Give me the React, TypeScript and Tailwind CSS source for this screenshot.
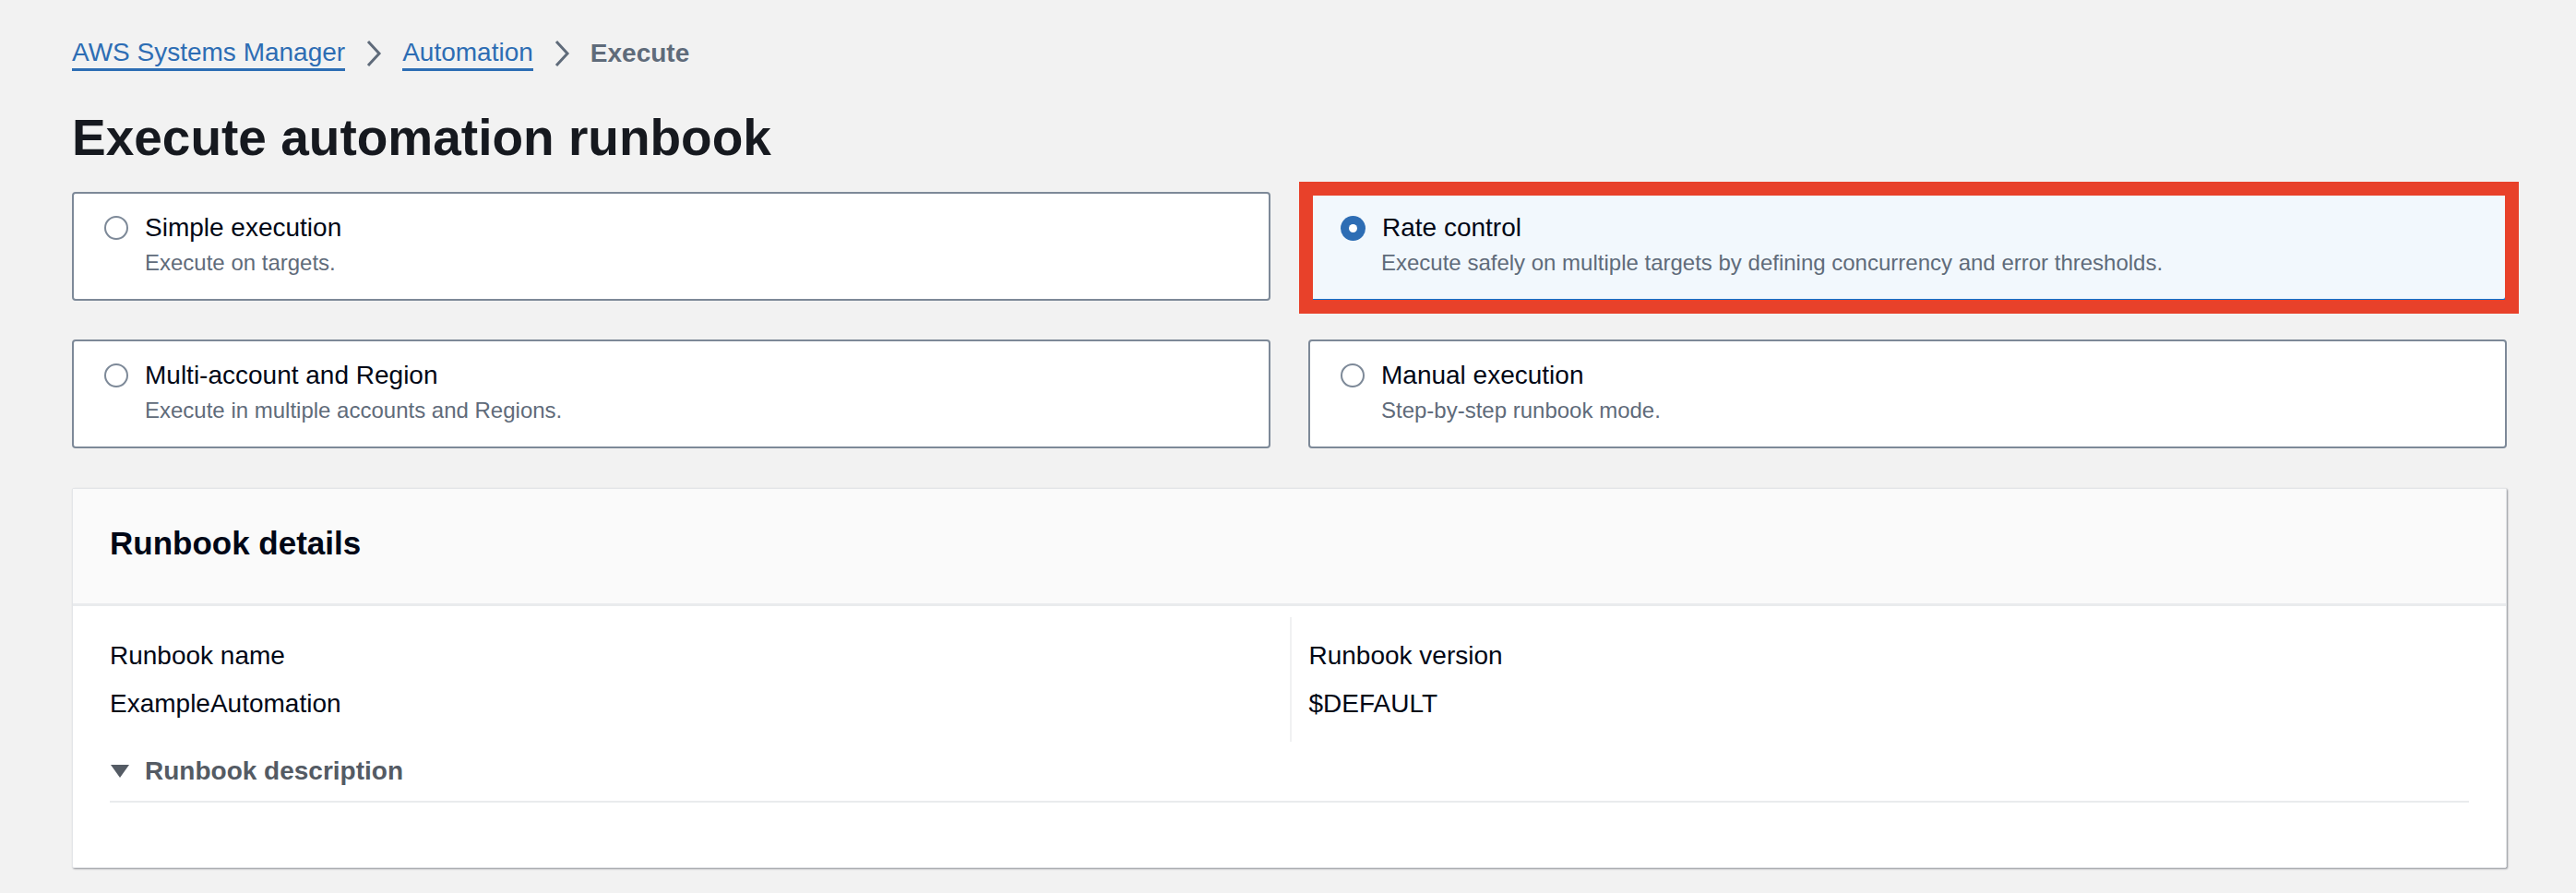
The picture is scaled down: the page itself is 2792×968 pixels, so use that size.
import React from "react";

type Option = {
  title: string;
  desc: string;
  selected?: boolean;
};

const options: Option[] = [
  { title: "Simple execution", desc: "Execute on targets." },
  {
    title: "Rate control",
    desc: "Execute safely on multiple targets by defining concurrency and error thresholds.",
    selected: true,
  },
  { title: "Multi-account and Region", desc: "Execute in multiple accounts and Regions." },
  { title: "Manual execution", desc: "Step-by-step runbook mode." },
];

const Chevron = () => (
  <svg width="18" height="30" viewBox="0 0 18 30" className="mx-[22px] shrink-0">
    <path d="M3 2 L15 15 L3 28" fill="none" stroke="#5f6b7a" strokeWidth="3" />
  </svg>
);

const Tile = ({ title, desc, selected }: Option) => (
  <div
    className={
      selected
        ? "relative h-[118px] rounded-[4px] border-2 border-[#0972d3] bg-[#f2f8fd] pl-[33px] pt-[17px]"
        : "relative h-[118px] rounded-[4px] border-2 border-[#7d8998] bg-white pl-[33px] pt-[17px]"
    }
  >
    <div className="flex items-center">
      {selected ? (
        <span className="flex h-[27px] w-[27px] shrink-0 items-center justify-center rounded-full bg-[#2d6db4]">
          <span className="h-[9px] w-[9px] rounded-full bg-white" />
        </span>
      ) : (
        <span className="h-[26px] w-[26px] shrink-0 rounded-full border-2 border-[#7d8998] bg-white" />
      )}
      <span className="ml-[18px] text-[28px] leading-[40px] text-[#000716]">{title}</span>
    </div>
    <div className="ml-[44px] mt-[2px] text-[24px] leading-[32px] text-[#5f6b7a]">{desc}</div>
    {selected && (
      <div className="pointer-events-none absolute -bottom-[16px] -left-[12px] -right-[15px] -top-[13px] border-[15px] border-[#e8412a]" />
    )}
  </div>
);

export default function App() {
  return (
    <div
      className="min-h-[968px] bg-[#f2f2f2] pl-[78px] pr-[75px] pt-[38px]"
      style={{ fontFamily: '"Liberation Sans", Arial, sans-serif' }}
    >
      <nav className="flex h-[40px] items-center text-[28px]">
        <a className="border-b-[3px] border-[#2d6db4] leading-[34px] text-[#2d6db4]">AWS Systems Manager</a>
        <Chevron />
        <a className="border-b-[3px] border-[#2d6db4] leading-[34px] text-[#2d6db4]">Automation</a>
        <Chevron />
        <span className="font-bold leading-[34px] text-[#5f6b7a]">Execute</span>
      </nav>

      <h1 className="mt-[39px] text-[55px] font-bold leading-[64px] text-[#16191f]">Execute automation runbook</h1>

      <div className="mt-[27px] grid grid-cols-2 gap-x-[41px] gap-y-[42px]">
        {options.map((o) => (
          <Tile key={o.title} {...o} />
        ))}
      </div>

      <section className="mt-[43px] h-[412px] rounded-[2px] border border-[#e3e5e8] bg-white shadow-[1px_1px_2px_rgba(0,7,22,0.4)]">
        <div className="border-b-[3px] border-[#e9ebed] bg-[#fafafa] pb-[43px] pl-[40px] pt-[37px]">
          <h2 className="text-[35px] font-bold leading-[44px] text-[#000716]">Runbook details</h2>
        </div>
        <div className="px-[40px] pt-[12px]">
          <div className="grid grid-cols-2">
            <div className="pb-[21px] pt-[22px]">
              <div className="text-[28px] leading-[40px] text-[#000716]">Runbook name</div>
              <div className="mt-[12px] text-[28px] leading-[40px] text-[#000716]">ExampleAutomation</div>
            </div>
            <div className="border-l-2 border-[#f0f1f2] pb-[21px] pl-[19px] pt-[22px]">
              <div className="text-[28px] leading-[40px] text-[#000716]">Runbook version</div>
              <div className="mt-[12px] text-[28px] leading-[40px] text-[#000716]">$DEFAULT</div>
            </div>
          </div>
          <div className="mt-[12px] flex items-center border-b-2 border-[#e9ebed] pb-[12px]">
            <svg width="22" height="16" viewBox="0 0 22 16" className="shrink-0">
              <path d="M1 1 H21 L11 15 Z" fill="#545b64" />
            </svg>
            <span className="ml-[16px] text-[28px] font-bold leading-[40px] text-[#545b64]">Runbook description</span>
          </div>
        </div>
      </section>
    </div>
  );
}
